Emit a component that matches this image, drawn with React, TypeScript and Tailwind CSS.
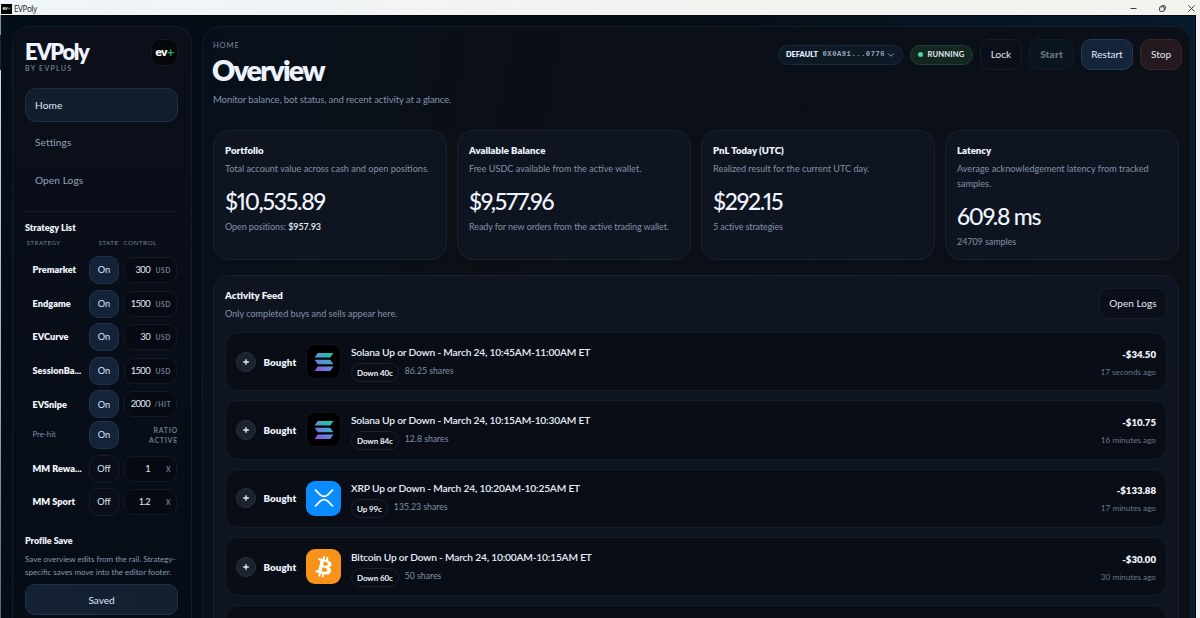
import type { ReactNode } from "react";
import clsx from "clsx";
import { ChevronDown, Plus } from "lucide-react";
import { SiBitcoin } from "react-icons/si";

type Strategy = {
  name: string;
  on: boolean;
  value?: string;
  unit?: string;
  sub?: boolean;
};

const strategies: Strategy[] = [
  { name: "Premarket", on: true, value: "300", unit: "USD" },
  { name: "Endgame", on: true, value: "1500", unit: "USD" },
  { name: "EVCurve", on: true, value: "30", unit: "USD" },
  { name: "SessionBa...", on: true, value: "1500", unit: "USD" },
  { name: "EVSnipe", on: true, value: "2000", unit: "/HIT" },
  { name: "Pre-hit", on: true, sub: true },
  { name: "MM Rewa...", on: false, value: "1", unit: "X" },
  { name: "MM Sport", on: false, value: "1.2", unit: "X" },
];

const stats: { title: string; desc: string; value: string; note: ReactNode }[] = [
  {
    title: "Portfolio",
    desc: "Total account value across cash and open positions.",
    value: "$10,535.89",
    note: (
      <>
        Open positions: <b className="font-semibold text-[#e6edf8]">$957.93</b>
      </>
    ),
  },
  {
    title: "Available Balance",
    desc: "Free USDC available from the active wallet.",
    value: "$9,577.96",
    note: "Ready for new orders from the active trading wallet.",
  },
  {
    title: "PnL Today (UTC)",
    desc: "Realized result for the current UTC day.",
    value: "$292.15",
    note: "5 active strategies",
  },
  {
    title: "Latency",
    desc: "Average acknowledgement latency from tracked samples.",
    value: "609.8 ms",
    note: "24709 samples",
  },
];

const trades = [
  { coin: "sol", title: "Solana Up or Down - March 24, 10:45AM-11:00AM ET", side: "Down 40c", shares: "86.25 shares", amount: "-$34.50", time: "17 seconds ago" },
  { coin: "sol", title: "Solana Up or Down - March 24, 10:15AM-10:30AM ET", side: "Down 84c", shares: "12.8 shares", amount: "-$10.75", time: "16 minutes ago" },
  { coin: "xrp", title: "XRP Up or Down - March 24, 10:20AM-10:25AM ET", side: "Up 99c", shares: "135.23 shares", amount: "-$133.88", time: "17 minutes ago" },
  { coin: "btc", title: "Bitcoin Up or Down - March 24, 10:00AM-10:15AM ET", side: "Down 60c", shares: "50 shares", amount: "-$30.00", time: "30 minutes ago" },
];

function CoinIcon({ coin }: { coin: string }) {
  if (coin === "btc") {
    return (
      <div className="flex size-[35px] shrink-0 items-center justify-center overflow-hidden rounded-[9px] bg-[#f7931a]">
        <SiBitcoin className="size-[34px] rounded-full bg-[radial-gradient(circle,#fff_55%,#f7931a_56%)] text-[#f7931a]" />
      </div>
    );
  }
  if (coin === "xrp") {
    return (
      <div className="flex size-[35px] shrink-0 items-center justify-center rounded-[9px] bg-[#0a8cff]">
        <svg viewBox="0 0 20 18" className="h-[18px] w-5" fill="none" stroke="#fff" strokeWidth="1.7">
          <path d="M1 .6l5.3 5.2a5.3 5.3 0 0 0 7.4 0L19 .6" />
          <path d="M1 17.4l5.3-5.2a5.3 5.3 0 0 1 7.4 0l5.3 5.2" />
        </svg>
      </div>
    );
  }
  return (
    <div className="flex size-[35px] shrink-0 items-center justify-center rounded-[9px] border border-[#10151d] bg-black">
      <svg viewBox="0 0 20 18" className="h-[18px] w-5">
        <defs>
          <linearGradient id="sol" gradientUnits="userSpaceOnUse" x1="17" y1="0" x2="4" y2="18">
            <stop offset="0" stopColor="#1fc99b" />
            <stop offset=".5" stopColor="#5497d5" />
            <stop offset="1" stopColor="#9450e6" />
          </linearGradient>
        </defs>
        <g fill="url(#sol)">
          <path d="M3.8 0h15.7l-3.3 4.4H.5z" />
          <path d="M.5 6.8h15.7l3.3 4.4H3.8z" />
          <path d="M3.8 13.6h15.7L16.2 18H.5z" />
        </g>
      </svg>
    </div>
  );
}

function TitleBar() {
  return (
    <div className="flex h-[15px] shrink-0 items-center bg-linear-to-r from-[#eef5f8] via-[#f3f3f3] to-[#f3f3ee] pr-[5px] pl-px text-[#2b2b2b]">
      <div className="mt-0.5 flex h-2.5 w-[11px] items-center justify-center bg-black text-[5px] leading-none font-bold text-white">
        ev<span className="text-[#22b573]">+</span>
      </div>
      <span className="mt-[3px] ml-[2px] font-['Noto_Sans'] text-[8px] leading-none tracking-[-0.4px]">EVPoly</span>
      <div className="mt-px ml-auto flex items-center gap-[22px]">
        <svg viewBox="0 0 7 7" className="size-[7px]" stroke="currentColor" strokeWidth=".9">
          <path d="M.5 3.5h6" />
        </svg>
        <svg viewBox="0 0 7 7" className="size-[7px]" fill="none" stroke="currentColor" strokeWidth=".9">
          <rect x=".6" y="1.8" width="4.6" height="4.6" rx="1" />
          <path d="M2 1.6Q2.2.6 3.3.6H5Q6.4.6 6.4 2v1.8q0 1-1 1.2" />
        </svg>
        <svg viewBox="0 0 7 7" className="size-[7px]" stroke="currentColor" strokeWidth=".9">
          <path d="M.5.5l6 6M6.5.5l-6 6" />
        </svg>
      </div>
    </div>
  );
}

function StrategyRow({ name, on, value, unit, sub }: Strategy) {
  return (
    <div className={clsx("flex h-7 shrink-0 items-center pl-[7.5px]", sub ? "mt-[2.6px]" : "mt-[5.6px]")}>
      <span
        className={clsx(
          "w-[56.5px] shrink-0 whitespace-nowrap",
          sub ? "text-[7.8px] text-[#8391a8]" : "text-[9.2px] font-extrabold text-[#f4f7fd]",
        )}
      >
        {name}
      </span>
      <span
        className={clsx(
          "flex h-7 w-[30px] shrink-0 items-center justify-center rounded-[10px] border text-[9.2px] text-[#dfe7f4]",
          on ? "border-[#20344a] bg-[#14233a]" : "border-[#151d29] bg-[#090e18]",
        )}
      >
        {on ? "On" : "Off"}
      </span>
      {sub ? (
        <span className="ml-auto text-right text-[7px] leading-[10.5px] font-bold tracking-[0.75px] text-[#6c7b92]">
          RATIO
          <br />
          ACTIVE
        </span>
      ) : (
        <span className="ml-[5px] flex h-[26px] w-[53px] items-center justify-end rounded-[9px] border border-[#131a25] bg-[#060a12] pr-[5px]">
          <span className="text-[9.4px] tracking-[-0.6px] text-[#e3eaf6]">{value}</span>
          <span className="w-[21px] text-right text-[6.8px] font-bold tracking-[0.5px] text-[#6c7b92]">{unit}</span>
        </span>
      )}
    </div>
  );
}

function Sidebar() {
  return (
    <aside className="flex w-[180px] shrink-0 flex-col rounded-t-[18px] border border-b-0 border-[#141c28] bg-linear-to-b from-[#0a0f19] to-[#070d16] pr-[13px] pl-3">
      <div className="flex h-[61px] shrink-0 justify-between pt-3">
        <div className="pt-px">
          <div className="text-[22px] leading-6 font-extrabold tracking-[-1.45px] text-[#eef3ff]">EVPoly</div>
          <div className="text-[7.2px] leading-2.5 tracking-[1.2px] text-[#8694aa]">BY EVPLUS</div>
        </div>
        <div className="flex size-[27px] items-center justify-center rounded-[9px] border border-[#141b26] bg-[#04060a] font-['DejaVu_Sans'] text-[10px] leading-none font-bold tracking-[-1px] text-white">
          ev<span className="text-[#1fb573]">+</span>
        </div>
      </div>

      <nav className="flex shrink-0 flex-col gap-1 text-[10.2px] tracking-[0.05px] text-[#94a2b8]">
        <span className="flex h-[34px] items-center rounded-[11px] border border-[#20303f] bg-[#121e2e] px-[9px] pt-px text-[#dfe8f5]">Home</span>
        <span className="flex h-[33px] items-center px-2.5 pt-px">Settings</span>
        <span className="flex h-[34px] items-center px-2.5 pt-px">Open Logs</span>
      </nav>

      <div className="mt-[13.5px] border-t border-[#131b27]" />
      <h2 className="mt-2.5 text-[9px] leading-3 font-extrabold text-[#eef3fc]">Strategy List</h2>
      <div className="mt-[5px] flex pl-[1.5px] text-[6.4px] leading-2 tracking-[0.4px] text-[#728198]">
        <span className="w-[72px]">STRATEGY</span>
        <span className="w-[25px]">STATE</span>
        <span>CONTROL</span>
      </div>
      <div className="mt-1">
        {strategies.map((s) => (
          <StrategyRow key={s.name} {...s} />
        ))}
      </div>

      <h2 className="mt-[19px] text-[9px] leading-3 font-extrabold tracking-[-0.05px] text-[#eef3fc]">Profile Save</h2>
      <p className="mt-1.5 text-[8px] leading-[13px] whitespace-nowrap text-[#8a98ae]">
        Save overview edits from the rail. Strategy-
        <br />
        specific saves move into the editor footer.
      </p>
      <div className="mt-[5px] flex h-[31px] shrink-0 items-center justify-center rounded-[10px] border border-[#1f3246] bg-linear-to-r from-[#132134] to-[#12202f] pt-px text-[10px] text-[#dfe8f5]">
        Saved
      </div>
    </aside>
  );
}

function Header() {
  return (
    <header className="-mr-[3px] flex h-[103px] shrink-0 items-start justify-between">
      <div className="pt-3">
        <div className="text-[7.7px] leading-3 tracking-[0.75px] text-[#77869c]">HOME</div>
        <h1 className="mt-[3px] -ml-px text-[28.5px] leading-8 font-extrabold tracking-[-1.75px] text-[#eef2ff]">Overview</h1>
        <p className="mt-[7px] text-[9.6px] leading-3.5 tracking-[-0.14px] text-[#8493ab]">
          Monitor balance, bot status, and recent activity at a glance.
        </p>
      </div>
      <div className="flex items-center pt-3 text-[10px] text-[#e3ebf7]">
        <div className="flex h-5 w-[125px] items-center rounded-full border border-[#1a2939] bg-[#0e1926] pl-[7.5px] text-[7.4px] font-extrabold">
          DEFAULT
          <span className="ml-[4.5px] font-['Liberation_Mono'] text-[7.2px] font-bold tracking-[0.5px] text-[#9aa9bf]">0X0A91...0776</span>
          <ChevronDown className="ml-px size-2.5 shrink-0" stroke="#9aa9bf" strokeWidth={2.2} />
        </div>
        <div className="ml-[7.5px] flex h-5 w-[63px] items-center rounded-full border border-[#1f3f38] bg-[#132720] pl-[7px] text-[7.6px] font-bold tracking-[0.15px]">
          <span className="mr-[4.5px] size-[5px] rounded-full bg-[#4fd3a5]" />
          RUNNING
        </div>
        <div className="ml-[7px] flex h-[31px] w-[42px] items-center justify-center rounded-[10px] border border-[#161e29] bg-[#0a0f18]">Lock</div>
        <div className="ml-[7px] flex h-[31px] w-[45px] items-center justify-center rounded-[10px] border border-[#101c27] bg-[#0b151f] font-extrabold tracking-[0.15px] text-[#656f7c]">Start</div>
        <div className="ml-[7px] flex h-[31px] w-[52px] items-center justify-center rounded-[10px] border border-[#243a50] bg-[#14243a]">Restart</div>
        <div className="ml-[7px] flex h-[31px] w-[42px] items-center justify-center rounded-[10px] border border-[#38262a] bg-[#24191e]">Stop</div>
      </div>
    </header>
  );
}

export default function App() {
  return (
    <div className="flex h-[618px] w-[1200px] flex-col overflow-hidden bg-[#f1f1f1] font-['Lato',sans-serif]">
      <TitleBar />
      <div className="flex min-h-0 flex-1">
        <div className="w-px shrink-0 bg-[linear-gradient(#8a8f94_0,#8a8f94_20px,#20242a_20px,#20242a_55px,#d8d8d8_55px,#a8adb2_360px,#60656c_100%)]" />
        <div className="flex min-w-0 flex-1 items-stretch border-t border-r border-[#02060b] bg-[linear-gradient(90deg,#040e18,#050c14_50%,#071a2b)] pt-2.5 pr-1 pl-[11px]">
          <Sidebar />
          <main className="ml-2.5 flex min-w-0 flex-1 flex-col rounded-t-[18px] border border-b-0 border-[#121b27] bg-[linear-gradient(100deg,#07101a,#0b0f15_30%,#0a0f18_65%,#0c0f16)] pr-[11px] pl-[10px]">
            <Header />

            <div className="grid h-[130px] shrink-0 grid-cols-4 gap-2.5">
              {stats.map((s) => (
                <section key={s.title} className="rounded-[16px] border border-[#18212d] bg-[#0e1520] px-[11px] pt-[13px]">
                  <h2 className="text-[9.6px] leading-[13px] font-extrabold tracking-[0.03px] text-[#f0f4fd]">{s.title}</h2>
                  <p className="mt-[4px] text-[9.1px] leading-[15px] text-[#8291a8]">{s.desc}</p>
                  <div className="mt-3 text-[23px] leading-[26px] font-medium tracking-[-1.25px] text-[#f0f4ff] proportional-nums">{s.value}</div>
                  <p className="mt-[6px] text-[9px] leading-[13px] tracking-[-0.08px] text-[#8291a8]">{s.note}</p>
                </section>
              ))}
            </div>

            <section className="mt-[15px] flex min-h-0 flex-1 flex-col rounded-t-[16px] border border-b-0 border-[#18212d] bg-[#0e1520] px-[11px] pt-3">
              <div className="flex h-11 shrink-0 justify-between">
                <div>
                  <h2 className="mt-px text-[9.7px] leading-[13px] font-extrabold text-[#f0f4fd]">Activity Feed</h2>
                  <p className="mt-[4px] text-[9.1px] leading-[15px] text-[#8291a8]">Only completed buys and sells appear here.</p>
                </div>
                <div className="flex h-[31px] w-[68px] items-center justify-center rounded-[10px] border border-[#161e2a] bg-[#0a0f19] text-[10px] tracking-[0.05px] text-[#e3ebf7]">
                  Open Logs
                </div>
              </div>

              <div className="flex flex-col gap-[9px]">
                {trades.map((t) => (
                  <article key={t.title} className="flex h-[59.3px] shrink-0 items-center rounded-[14px] border border-[#141d28] bg-[#080d16] px-2.5">
                    <span className="flex size-5 items-center justify-center rounded-full border border-[#2a313d] bg-[#1d232e] text-[#e6edf8]">
                      <Plus className="size-2" strokeWidth={4} />
                    </span>
                    <span className="ml-[7.5px] w-[42.5px] pt-px text-[9.8px] font-extrabold tracking-[0.08px] text-[#eef3fc]">Bought</span>
                    <CoinIcon coin={t.coin} />
                    <div className="ml-2.5">
                      <h3 className="text-[10.2px] leading-[14px] font-semibold tracking-[-0.18px] text-[#e9effa]">{t.title}</h3>
                      <div className="mt-1 -mb-[3px] flex">
                        <span className="flex h-[19px] items-center rounded-full border border-[#1a222d] px-[5px] pt-px text-[8px] font-bold tracking-[-0.1px] text-[#eef3fc]">
                          {t.side}
                        </span>
                        <span className="ml-1.5 text-[8.7px] leading-4 text-[#8291a8]">{t.shares}</span>
                      </div>
                    </div>
                    <div className="ml-auto pt-[3px] text-right">
                      <div className="text-[9.6px] leading-3 font-extrabold text-[#f4f7fd]">{t.amount}</div>
                      <div className="mt-[5px] text-[8.1px] leading-3 tracking-[0.04px] text-[#6a798f]">{t.time}</div>
                    </div>
                  </article>
                ))}
                <div className="h-[59.3px] shrink-0 rounded-[14px] border border-[#141d28] bg-[#080d16]" />
              </div>
            </section>
          </main>
        </div>
        <div className="w-1 shrink-0" />
      </div>
    </div>
  );
}
